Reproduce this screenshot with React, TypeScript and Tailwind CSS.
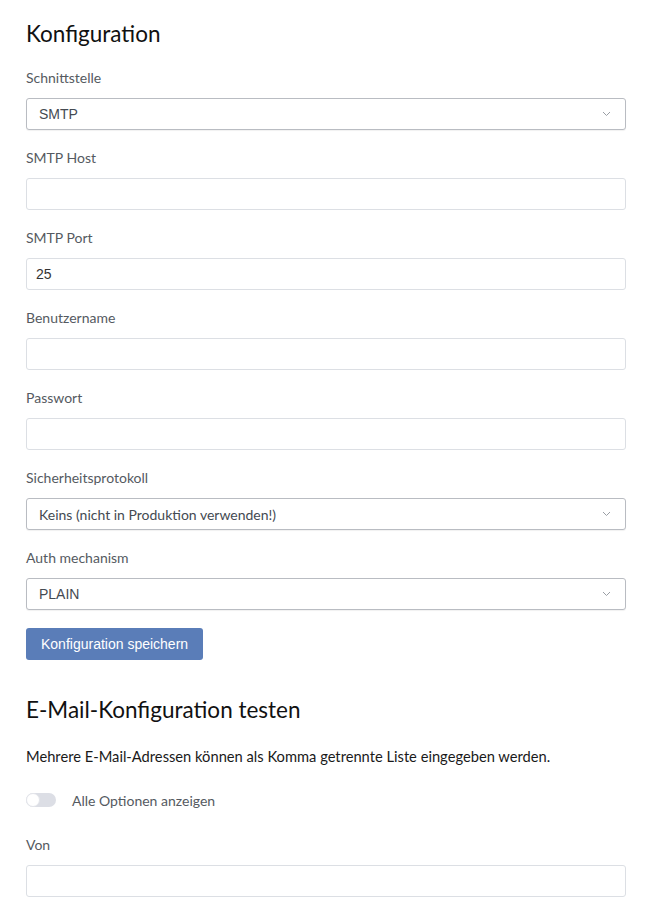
import { useState } from "react";

const font = { fontFamily: "Lato, 'Noto Sans', sans-serif" };

function Label({ children }: { children: React.ReactNode }) {
  return <label className="block h-5 leading-5 text-[14px] text-[#555a61] mb-[10px]">{children}</label>;
}

function TextField({ label, value = "" }: { label: string; value?: string }) {
  const [v, setV] = useState(value);
  return (
    <div className="mb-[18px]">
      <Label>{label}</Label>
      <input
        value={v}
        onChange={(e) => setV(e.target.value)}
        className="block w-full h-8 rounded-[3px] border border-[#dcdfe4] bg-white px-[9px] text-[14px] text-[#333] outline-none"
        style={{ fontFamily: "'Liberation Sans', Arial, sans-serif" }}
      />
    </div>
  );
}

function SelectField({ label, value, arial }: { label: string; value: string; arial?: boolean }) {
  return (
    <div className="mb-[18px]">
      <Label>{label}</Label>
      <div className="flex items-center justify-between w-full h-8 rounded-[3px] border border-[#b9bcc2] bg-white pl-3 pr-[14px] shadow-[0_1px_1px_rgba(0,0,0,0.06)]">
        <span
          className="text-[14px] text-[#444a52]"
          style={arial ? { fontFamily: "'Liberation Sans', Arial, sans-serif" } : undefined}
        >
          {value}
        </span>
        <svg width="9" height="6" viewBox="0 0 9 6" fill="none">
          <path d="M1 1l3.5 3.5L8 1" stroke="#9a9ea5" strokeWidth="1" />
        </svg>
      </div>
    </div>
  );
}

export default function App() {
  const [showAll, setShowAll] = useState(false);

  return (
    <div className="bg-white min-h-[900px] px-[26px] pt-[20px] w-[652px]" style={font}>
      <h2 className="text-[22.5px] leading-7 text-[#111] mb-[20px]">Konfiguration</h2>

      <SelectField label="Schnittstelle" value="SMTP" arial />
      <TextField label="SMTP Host" />
      <TextField label="SMTP Port" value="25" />
      <TextField label="Benutzername" />
      <TextField label="Passwort" />
      <SelectField label="Sicherheitsprotokoll" value="Keins (nicht in Produktion verwenden!)" />
      <SelectField label="Auth mechanism" value="PLAIN" arial />

      <button
        className="h-8 px-[15px] rounded-[3px] bg-[#5a7db8] text-white text-[14px]"
        style={{ fontFamily: "'Liberation Sans', Arial, sans-serif" }}
      >
        Konfiguration speichern
      </button>

      <h2 className="mt-[36px] text-[22.5px] leading-7 text-[#111]">E-Mail-Konfiguration testen</h2>
      <p className="mt-[22px] text-[14.7px] leading-5 text-[#1a1a1a]">
        Mehrere E-Mail-Adressen können als Komma getrennte Liste eingegeben werden.
      </p>

      <div className="mt-[24px] flex items-center h-5 mb-[25px]">
        <button
          onClick={() => setShowAll(!showAll)}
          className={`relative w-[30px] h-[14px] rounded-full ${showAll ? "bg-[#5a7db8]" : "bg-[#dcdee5]"}`}
        >
          <span
            className={`absolute top-0 w-[14px] h-[14px] rounded-full bg-white border border-[#e3e5ea] ${showAll ? "left-[16px]" : "left-0"}`}
          />
        </button>
        <span className="ml-4 text-[14px] text-[#555a61]">Alle Optionen anzeigen</span>
      </div>

      <TextField label="Von" />
    </div>
  );
}
